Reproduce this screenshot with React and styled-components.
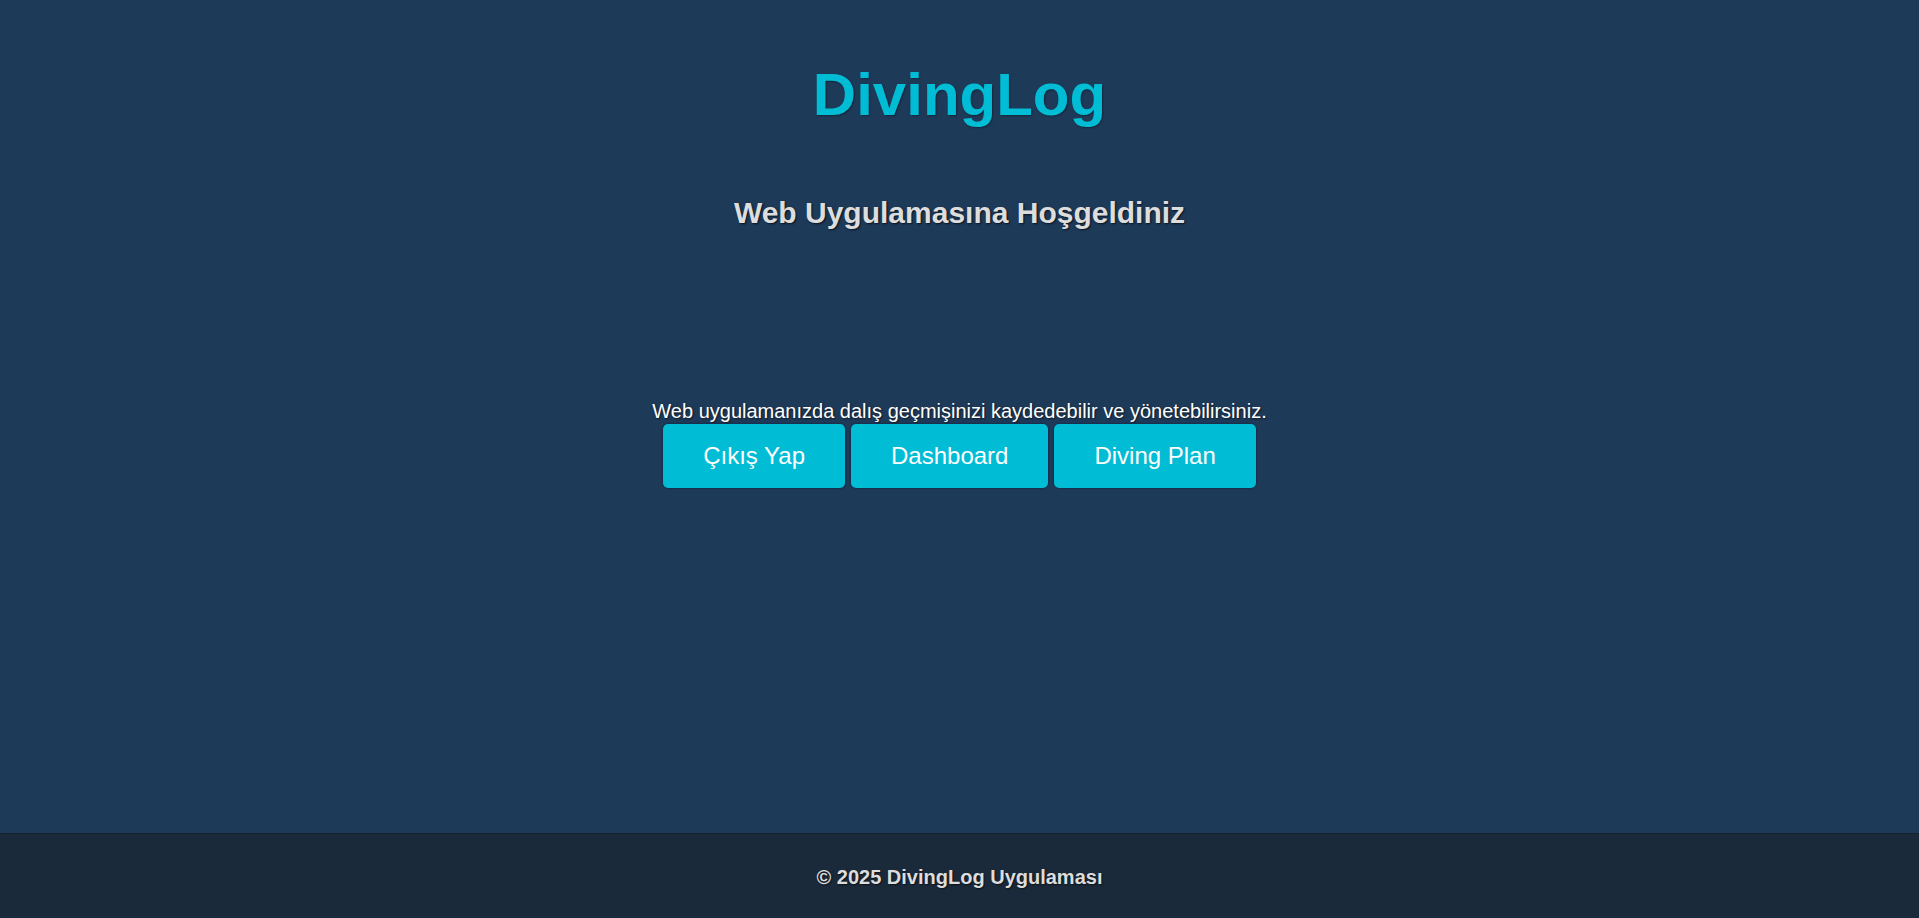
import React from "react";
import styled, { createGlobalStyle } from "styled-components";

const GlobalStyle = createGlobalStyle`
  html, body {
    margin: 0;
    padding: 0;
    background: #1e3a59;
    font-family: "Liberation Sans", Arial, sans-serif;
  }
`;

const Page = styled.div`
  min-height: 100vh;
  display: flex;
  flex-direction: column;
  background: #1e3a59;
`;

const Main = styled.main`
  flex: 1;
  display: flex;
  flex-direction: column;
  align-items: center;
  padding-top: 60px;
`;

const Title = styled.h1`
  margin: 0;
  font-size: 60px;
  font-weight: bold;
  color: #00bcd4;
  text-shadow: 1px 1px 2px rgba(0, 0, 0, 0.35);
`;

const Subtitle = styled.h2`
  margin: 67px 0 0;
  font-size: 30px;
  font-weight: bold;
  color: #dddddd;
  text-shadow: 1px 1px 2px rgba(0, 0, 0, 0.7);
`;

const Intro = styled.p`
  margin: 170px 0 0;
  font-size: 20px;
  color: #ffffff;
  text-shadow: 1px 1px 2px rgba(0, 0, 0, 0.6);
`;

const Actions = styled.div`
  display: flex;
  gap: 6px;
  margin-top: 1px;
`;

const Button = styled.button`
  padding: 18px 40px;
  border: none;
  border-radius: 5px;
  background: #00bcd4;
  color: #ffffff;
  font-family: "Liberation Sans", Arial, sans-serif;
  font-size: 24px;
  line-height: 1.15;
  cursor: pointer;
  box-shadow: 0 0 2px rgba(10, 20, 50, 0.9);

  &:hover {
    background: #00a5bb;
  }
`;

const Footer = styled.footer`
  height: 85px;
  display: flex;
  align-items: center;
  justify-content: center;
  background: #1b2a3a;
  border-top: 1px solid #17222f;
  box-sizing: border-box;
`;

const FooterText = styled.p`
  margin: 0;
  padding-top: 2px;
  font-size: 20px;
  font-weight: bold;
  color: #dddddd;
  text-shadow: 1px 1px 2px rgba(0, 0, 0, 0.6);
`;

export default function App() {
  return (
    <Page>
      <GlobalStyle />
      <Main>
        <Title>DivingLog</Title>
        <Subtitle>Web Uygulamasına Hoşgeldiniz</Subtitle>
        <Intro>Web uygulamanızda dalış geçmişinizi kaydedebilir ve yönetebilirsiniz.</Intro>
        <Actions>
          <Button>Çıkış Yap</Button>
          <Button>Dashboard</Button>
          <Button>Diving Plan</Button>
        </Actions>
      </Main>
      <Footer>
        <FooterText>© 2025 DivingLog Uygulaması</FooterText>
      </Footer>
    </Page>
  );
}
